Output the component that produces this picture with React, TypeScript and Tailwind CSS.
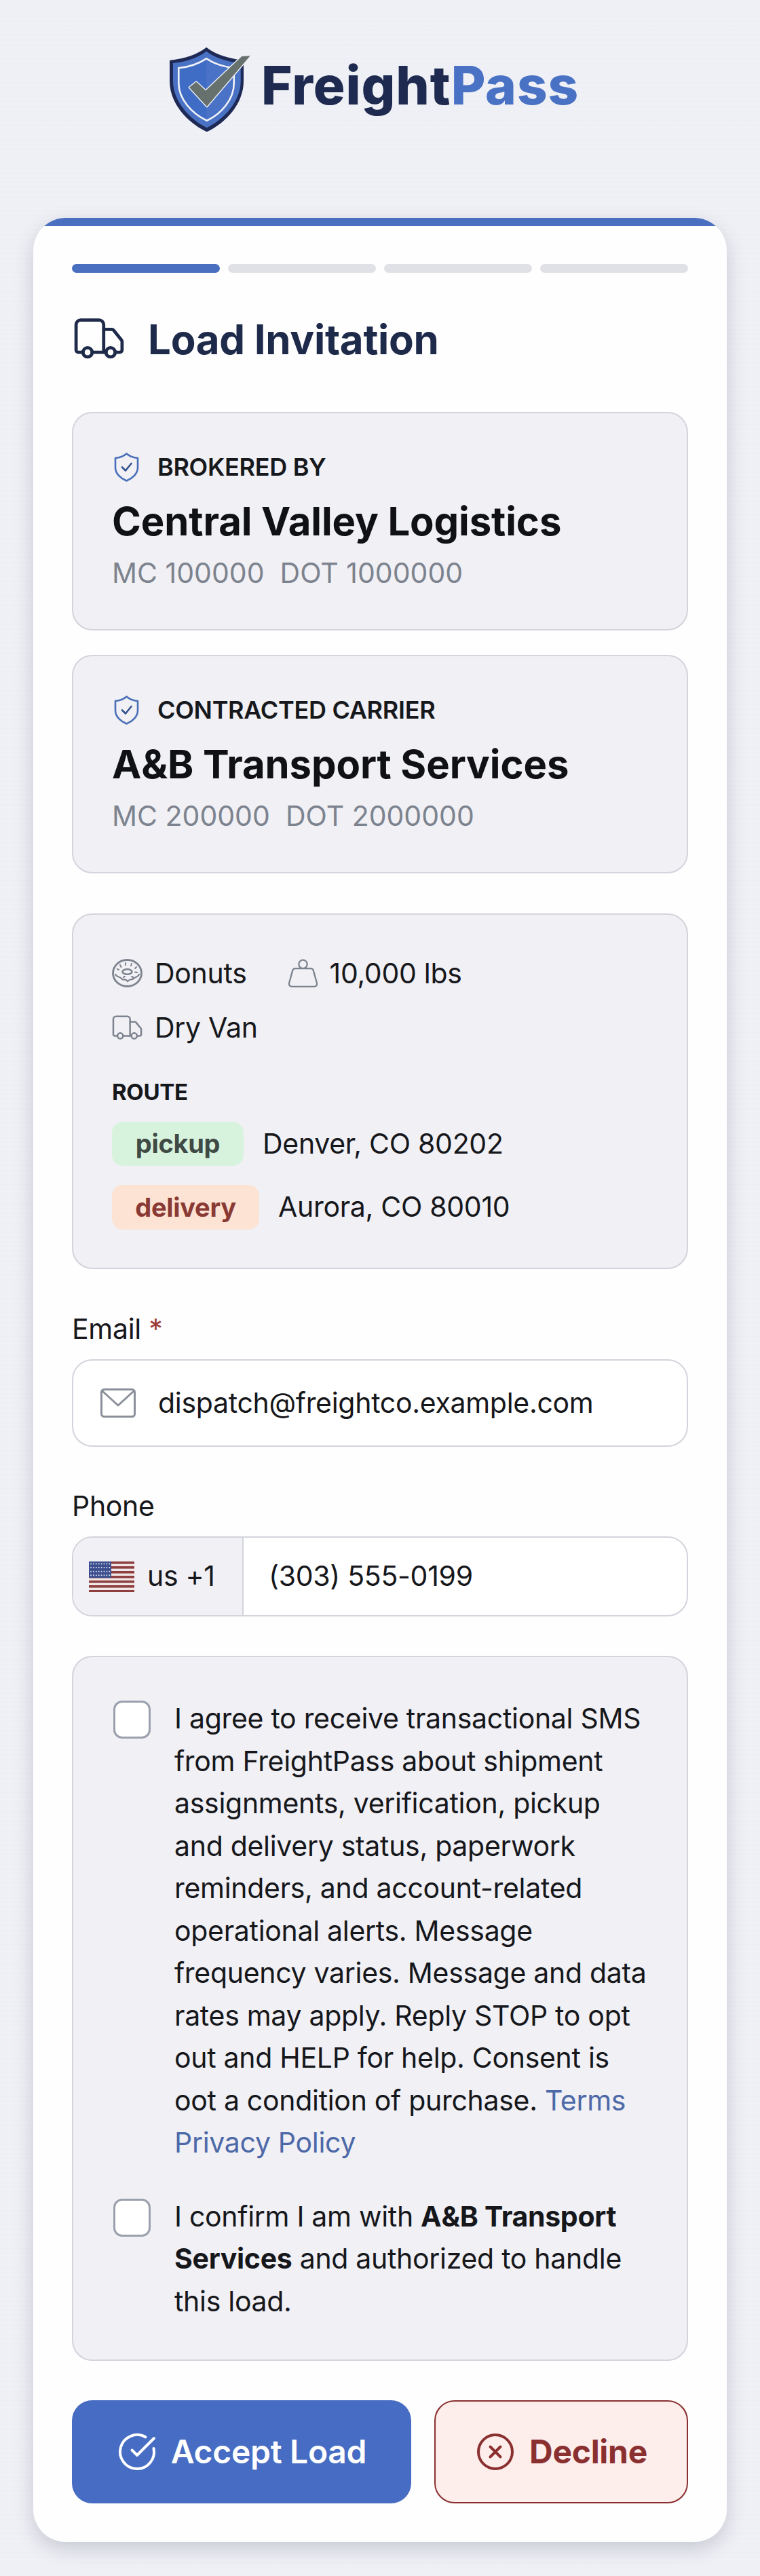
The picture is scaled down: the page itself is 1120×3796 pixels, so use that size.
import { CircleCheckBig, CircleX } from "lucide-react";

function LogoMark() {
  return (
    <svg viewBox="145 85 365 385" className="w-[122px] h-[128px] shrink-0">
      <path d="M313 90C270 125 210 140 150 148V240C150 340 230 425 315 465C400 425 478 340 478 240V148C420 140 355 125 313 90Z" fill="#1e2a55" />
      <path d="M313 108C270 140 215 155 165 160V240C165 330 240 410 315 447C390 410 465 330 465 240V160C415 155 355 140 313 108Z" fill="#4a72c4" />
      <path d="M313 140C275 165 230 178 190 182V250C190 320 250 385 315 415C380 385 435 320 435 250V182C400 178 350 165 313 140Z" fill="#3f6cc4" stroke="#f1f2f7" strokeWidth="8" />
      <path d="M313 146V410C375 380 430 320 430 250V186C400 180 350 170 313 146Z" fill="#4a72c6" />
      <path d="M237 268L268 243L310 282L470 130L507 128L315 353Z" fill="#66706c" stroke="#eef0f5" strokeWidth="8" paintOrder="stroke" strokeLinejoin="round" />
    </svg>
  );
}

function TruckIcon({ className, strokeWidth }: { className: string; strokeWidth: number }) {
  return (
    <svg viewBox="1.2 3.2 21.6 18" fill="none" stroke="currentColor" strokeWidth={strokeWidth} strokeLinecap="round" strokeLinejoin="round" className={className}>
      <path d="M14 18V6a2 2 0 0 0-2-2H4a2 2 0 0 0-2 2v11a1 1 0 0 0 1 1h2" />
      <path d="M15 18H9" />
      <path d="M19 18h2a1 1 0 0 0 1-1v-3.65a1 1 0 0 0-.22-.624l-3.48-4.35A1 1 0 0 0 17.52 8H14" />
      <circle cx="17" cy="18" r="2" />
      <circle cx="7" cy="18" r="2" />
    </svg>
  );
}

function ShieldIcon() {
  return (
    <svg viewBox="0 0 37 43" fill="none" strokeLinecap="round" strokeLinejoin="round" className="w-[37px] h-[43px] shrink-0">
      <path d="M18.5 1.5C14 5.5 8 7.5 2 8V22C2 31 10 38 18.5 41.5C27 38 35 31 35 22V8C29 7.5 23 5.5 18.5 1.5Z" stroke="#4a6fb8" strokeWidth="2.6" />
      <path d="M12 21.5L17 26.5L25.5 16" stroke="#35538f" strokeWidth="2.6" />
    </svg>
  );
}

function DonutIcon() {
  return (
    <svg viewBox="0 0 45 42" fill="none" stroke="#7d838e" strokeLinecap="round" className="w-[45px] h-[42px] shrink-0">
      <ellipse cx="22.5" cy="21" rx="21" ry="19.5" strokeWidth="2.8" />
      <ellipse cx="22.5" cy="19" rx="7" ry="3.8" strokeWidth="2.6" />
      <path d="M5 23C8 28 11 25 14 29C17 33 20 28 23 33C26 29 30 32 33 28C36 26 38 27 40 23" strokeWidth="2.2" />
      <path d="M12 9l1.5 3M20 6v3M29 7l-1 3M36 12l-2 2M8 15l2 1M37 20l-3-.5M17 27l2-1M29 26l2 1" strokeWidth="2" />
    </svg>
  );
}

function WeightIcon() {
  return (
    <svg viewBox="1.6 1.6 20.8 20" fill="none" stroke="#7d838e" strokeWidth="1.1" strokeLinecap="round" strokeLinejoin="round" className="w-[43px] h-[43px] shrink-0">
      <circle cx="12" cy="5" r="3" />
      <path d="M6.5 8a2 2 0 0 0-1.905 1.46L2.1 18.5A2 2 0 0 0 4 21h16a2 2 0 0 0 1.925-2.54L19.4 9.5A2 2 0 0 0 17.48 8Z" />
    </svg>
  );
}

function MailIcon() {
  return (
    <svg viewBox="0 0 52 43" fill="none" stroke="#8a8f99" strokeWidth="3" strokeLinejoin="round" className="w-[52px] h-[43px] shrink-0">
      <rect x="1.5" y="1.5" width="49" height="40" rx="4" />
      <path d="M3 4L26 25L49 4" />
    </svg>
  );
}

function UsFlag() {
  const stripes = [0, 1, 2, 3, 4, 5, 6];
  const stars = [0, 1, 2, 3, 4, 5, 6, 7];
  return (
    <svg viewBox="0 0 67 45" className="w-[67px] h-[45px] shrink-0">
      <rect width="67" height="45" fill="#f0e8e8" />
      {stripes.map((i) => (
        <rect key={i} y={i * 7} width="67" height="3.6" fill="#8f3f40" />
      ))}
      <rect width="33" height="24" fill="#3d4f8e" />
      {stars.map((i) =>
        [0, 1, 2, 3].map((j) => (
          <circle key={`${i}-${j}`} cx={3 + i * 3.9} cy={3.5 + j * 5.6} r="1" fill="#dfe3ef" />
        ))
      )}
    </svg>
  );
}

function Checkbox() {
  return <div className="w-[55px] h-[56px] shrink-0 rounded-[13px] border-[3px] border-[#9aa0ac] bg-white"></div>;
}

function PartyBox({ label, name, numbers }: { label: string; name: string; numbers: string }) {
  return (
    <div className="rounded-[30px] border-2 border-[#d3d4dc] bg-[#f0f0f5] px-[58px] py-[58px]">
      <div className="flex h-[43px] items-center gap-[27px] pl-[2px]">
        <ShieldIcon />
        <span className="text-[36px] leading-[43px] font-semibold text-[#17181c]">{label}</span>
      </div>
      <div className="mt-[23px] -ml-[1px] text-[58px] leading-[70px] font-bold tracking-[-0.1px] text-[#101114]">{name}</div>
      <div className="mt-[16px] -ml-[1px] whitespace-pre text-[41px] leading-[50px] tracking-normal text-[#7d838e]">{numbers}</div>
    </div>
  );
}

export default function App() {
  return (
    <div className="min-h-[3796px] bg-[repeating-linear-gradient(0deg,#eff0f5_0px,#f0f1f6_3px,#eeeff4_7px)] font-['Inter',sans-serif] text-[41px] tracking-[-0.3px] text-[#16171b]">
      <div className="flex pl-[248px] pt-[68px] pb-[125px]">
        <LogoMark />
        <div className="ml-[15px] text-[78px] leading-[116px] font-extrabold tracking-[0.9px] text-[#1e2a4f]">
          Freight<span className="text-[#4a72c4]">Pass</span>
        </div>
      </div>

      <div className="mx-[49px] overflow-hidden rounded-[48px] bg-[#fefefe] shadow-[0_10px_28px_rgba(60,65,90,0.22)]">
        <div className="h-[12px] bg-[#4a6fc0]"></div>
        <div className="px-[57px] pt-[56px] pb-[57px]">
          <div className="grid grid-cols-4 gap-[12px]">
            <div className="h-[13px] rounded-full bg-[#4a6fc0]"></div>
            <div className="h-[13px] rounded-full bg-[#e0e1e6]"></div>
            <div className="h-[13px] rounded-full bg-[#e0e1e6]"></div>
            <div className="h-[13px] rounded-full bg-[#e0e1e6]"></div>
          </div>

          <div className="mt-[68px] flex h-[59px] items-center">
            <TruckIcon className="ml-[3px] h-[61px] w-[74px] text-[#1e2a4a]" strokeWidth={1.4} />
            <h1 className="ml-[35px] text-[60px] leading-[60px] font-bold tracking-[-0.3px] text-[#1e2a4a]">Load Invitation</h1>
          </div>

          <div className="mt-[78px]">
            <PartyBox label="BROKERED BY" name="Central Valley Logistics" numbers="MC 100000  DOT 1000000" />
          </div>
          <div className="mt-[36px]">
            <PartyBox label="CONTRACTED CARRIER" name="A&B Transport Services" numbers="MC 200000  DOT 2000000" />
          </div>

          <div className="mt-[59px] rounded-[30px] border-2 border-[#d3d4dc] bg-[#f0f0f5] pl-[57px] pr-[40px] pt-[64px] pb-[56px]">
            <div className="flex h-[44px] items-center">
              <DonutIcon />
              <span className="ml-[18px] leading-[44px]">Donuts</span>
              <div className="ml-[61px]"><WeightIcon /></div>
              <span className="ml-[18px] leading-[44px]">10,000 lbs</span>
            </div>
            <div className="mt-[36px] flex h-[44px] items-center">
              <TruckIcon className="h-[37px] w-[45px] text-[#7d838e]" strokeWidth={1.2} />
              <span className="ml-[18px] leading-[44px]">Dry Van</span>
            </div>
            <div className="mt-[53px] text-[33px] leading-[40px] font-bold">ROUTE</div>
            <div className="mt-[24px] flex items-center">
              <span className="flex h-[65px] w-[194px] items-center justify-center rounded-[16px] bg-[#d8f3dd] text-[38px] font-bold text-[#3f4a45]">pickup</span>
              <span className="ml-[28px]">Denver, CO 80202</span>
            </div>
            <div className="mt-[28px] flex items-center">
              <span className="flex h-[66px] w-[217px] items-center justify-center rounded-[16px] bg-[#fde3d3] text-[38px] font-bold text-[#8a3a34]">delivery</span>
              <span className="ml-[28px]">Aurora, CO 80010</span>
            </div>
          </div>

          <div className="mt-[63px] leading-[50px]">
            Email <span className="text-[#9b3a34]">*</span>
          </div>
          <div className="mt-[20px] flex h-[129px] items-center rounded-[30px] border-2 border-[#d3d4dc] bg-white pl-[40px]">
            <MailIcon />
            <span className="ml-[33px]">dispatch@freightco.example.com</span>
          </div>

          <div className="mt-[62px] leading-[50px]">Phone</div>
          <div className="mt-[20px] flex h-[118px] overflow-hidden rounded-[30px] border-2 border-[#d3d4dc] bg-white">
            <div className="flex w-[251px] items-center border-r-2 border-[#d3d4dc] bg-[#f0f0f5] pl-[23px]">
              <UsFlag />
              <span className="ml-[19px]">us +1</span>
            </div>
            <div className="flex items-center pl-[37px]">(303) 555-0199</div>
          </div>

          <div className="mt-[58px] rounded-[30px] border-2 border-[#d3d4dc] bg-[#f0f0f5] pl-[59px] pr-[46px] pt-[59px] pb-[55px] leading-[62.5px]">
            <div className="flex">
              <div className="mt-[5px]"><Checkbox /></div>
              <p className="ml-[35px]">
                I agree to receive transactional SMS from FreightPass about shipment assignments, verification, pickup and delivery status, paperwork reminders, and account-related operational alerts. Message frequency varies. Message and data rates may apply. Reply STOP to opt out and HELP for help. Consent is oot a condition of purchase. <a className="text-[#4d69a8]">Terms</a> <a className="text-[#4d69a8]">Privacy Policy</a>
              </p>
            </div>
            <div className="mt-[46px] flex">
              <div className="mt-[5px]"><Checkbox /></div>
              <p className="ml-[35px]">
                I confirm I am with <b className="font-bold">A&B Transport</b> <b className="font-bold">Services</b> and authorized to handle this load.
              </p>
            </div>
          </div>

          <div className="mt-[58px] flex gap-[34px]">
            <button className="flex h-[152px] w-[500px] items-center justify-center rounded-[30px] bg-[#466cc3] text-[48px] font-semibold text-white">
              <CircleCheckBig size={60} strokeWidth={1.6} />
              <span className="ml-[20px]">Accept Load</span>
            </button>
            <button className="flex h-[152px] flex-1 items-center justify-center rounded-[30px] border-2 border-[#8a3030] bg-[#fdeeec] text-[48px] font-bold text-[#8a3030]">
              <CircleX size={60} strokeWidth={1.6} />
              <span className="ml-[20px]">Decline</span>
            </button>
          </div>
        </div>
      </div>
      <div className="h-[47px]"></div>
    </div>
  );
}
